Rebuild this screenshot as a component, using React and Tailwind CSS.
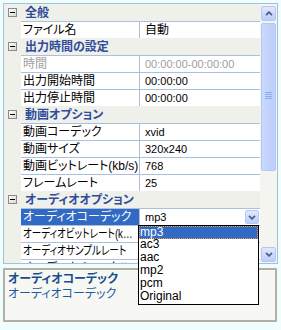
import React from 'react';

const rows = [
  { cat: '全般' },
  { name: 'ファイル名', value: '自動', jp: true },
  { cat: '出力時間の設定' },
  { name: '時間', value: '00:00:00-00:00:00', disabled: true },
  { name: '出力開始時間', value: '00:00:00' },
  { name: '出力停止時間', value: '00:00:00' },
  { cat: '動画オプション' },
  { name: '動画コーデック', value: 'xvid' },
  { name: '動画サイズ', value: '320x240' },
  { name: '動画ビットレート(kb/s)', value: '768' },
  { name: 'フレームレート', value: '25' },
  { cat: 'オーディオオプション' },
  { name: 'オーディオコーデック', value: 'mp3', selected: true },
  { name: 'オーディオビットレート(kb/s)', value: '128', narrow: true },
  { name: 'オーディオサンプルレート', value: '44100', narrow: true },
  { name: 'オーディオチャンネル', value: '2' },
];

const options = ['mp3', 'ac3', 'aac', 'mp2', 'pcm', 'Original'];

const Chevron = ({ up }) => (
  <svg width="8" height="5" viewBox="0 0 8 5">
    <path
      d={up ? 'M1 4.2 L4 1.2 L7 4.2' : 'M1 0.8 L4 3.8 L7 0.8'}
      fill="none"
      stroke="#4d6185"
      strokeWidth="1.8"
    />
  </svg>
);

const MinusBox = () => (
  <div className="w-[9px] h-[9px] border border-[#8a8a8a] bg-gradient-to-br from-white to-[#d8d8d0] flex items-center justify-center">
    <div className="w-[5px] h-[1px] bg-black" />
  </div>
);

const ScrollButton = ({ up }) => (
  <div className="h-[15px] rounded-[2px] border border-[#b4c8f6] bg-gradient-to-b from-[#e0e8fe] to-[#bccdfa] flex items-center justify-center">
    <Chevron up={up} />
  </div>
);

// one line of the property grid
const Row = ({ row }) => {
  if (row.cat) {
    return (
      <div className="h-[17px] flex items-center bg-[#f0f0ea]">
        <div className="w-[17px] flex justify-center">
          <MinusBox />
        </div>
        <span className="pl-[4px] text-[12px] leading-[16px] font-bold text-[#2f4c9c] whitespace-nowrap">{row.cat}</span>
      </div>
    );
  }
  return (
    <div className="h-[17px] flex">
      <div className="w-[17px] shrink-0 bg-[#f0f0ea]" />
      <div className="flex-1 flex border-t border-[#aac0dc] bg-white min-w-0">
        <div
          className={`w-[118px] shrink-0 pl-[2px] text-[12px] leading-[16px] overflow-hidden ${
            row.selected ? 'bg-[#316ac5] text-white' : row.disabled ? 'text-[#a0a0a0]' : 'text-black'
          }`}
        >
          {row.narrow ? (
            // long kana labels are squeezed like the proportional UI font
            <div className="w-[143px] origin-left scale-x-[0.8] truncate">{row.name}</div>
          ) : (
            <div className="truncate">{row.name}</div>
          )}
        </div>
        <div className="flex-1 flex items-center border-l border-[#aac0dc] pl-[5px] min-w-0">
          <span
            className={`flex-1 whitespace-nowrap leading-[16px] ${row.jp ? 'text-[12px]' : 'text-[11px]'} ${
              row.disabled ? 'text-[#a0a0a0]' : 'text-black'
            }`}
          >
            {row.value}
          </span>
          {row.selected && (
            <div className="w-[14px] h-[14px] mr-[1px] rounded-[2px] border border-[#b4c8f6] bg-gradient-to-b from-[#e0e8fe] to-[#bccdfa] flex items-center justify-center">
              <Chevron />
            </div>
          )}
        </div>
      </div>
    </div>
  );
};

const App = () => {
  return (
    <div className="relative w-[281px] h-[330px] bg-[#effdfd] pt-[3px] pl-[3px] overflow-hidden font-['Liberation_Sans','Noto_Sans_CJK_JP',sans-serif] [font-feature-settings:'palt']">
      {/* property grid */}
      <div className="w-[275px] h-[261px] border border-[#a7c0d9] flex bg-[#f0f0ea]">
        <div className="w-[256px] overflow-hidden">
          {rows.map((row, i) => (
            <Row key={i} row={row} />
          ))}
        </div>

        {/* scrollbar */}
        <div className="w-[17px] bg-[#f4f4f0] flex flex-col pt-[2px] pb-[1px] px-[1px]">
          <ScrollButton up />
          <div className="mt-[2px] h-[148px] rounded-[2px] border border-[#b4c8f6] bg-gradient-to-r from-[#c9d8fd] to-[#bccdfa] flex items-center justify-center">
            <div className="flex flex-col gap-[1px] -mt-[4px]">
              <div className="w-[7px] h-[1px] bg-[#8cacf0]" />
              <div className="w-[7px] h-[1px] bg-[#8cacf0]" />
              <div className="w-[7px] h-[1px] bg-[#8cacf0]" />
              <div className="w-[7px] h-[1px] bg-[#8cacf0]" />
            </div>
          </div>
          <div className="flex-1" />
          <ScrollButton />
        </div>
      </div>

      {/* description panel */}
      <div className="mt-[4px] w-[274px] h-[54px] border-2 border-[#b0b0a4] bg-[#f7f8f4] pl-[3px] pt-[1px]">
        <p className="text-[12px] leading-[16px] font-bold text-[#164e8c]">オーディオコーデック</p>
        <p className="text-[12px] leading-[14px] text-[#1f5b9a]">オーディオコーデック</p>
      </div>

      {/* open combo list, drawn over grid and panel */}
      <div className="absolute left-[138px] top-[225px] w-[121px] h-[80px] border border-black bg-white">
        {options.map((opt, i) => (
          <div
            key={opt}
            className={`h-[13px] text-[12px] leading-[11px] ${
              i === 0 ? 'bg-[#316ac5] text-white border border-dotted border-[#f0a030]' : 'pl-[1px] text-black'
            }`}
          >
            {opt}
          </div>
        ))}
      </div>
    </div>
  );
};

export default App;
